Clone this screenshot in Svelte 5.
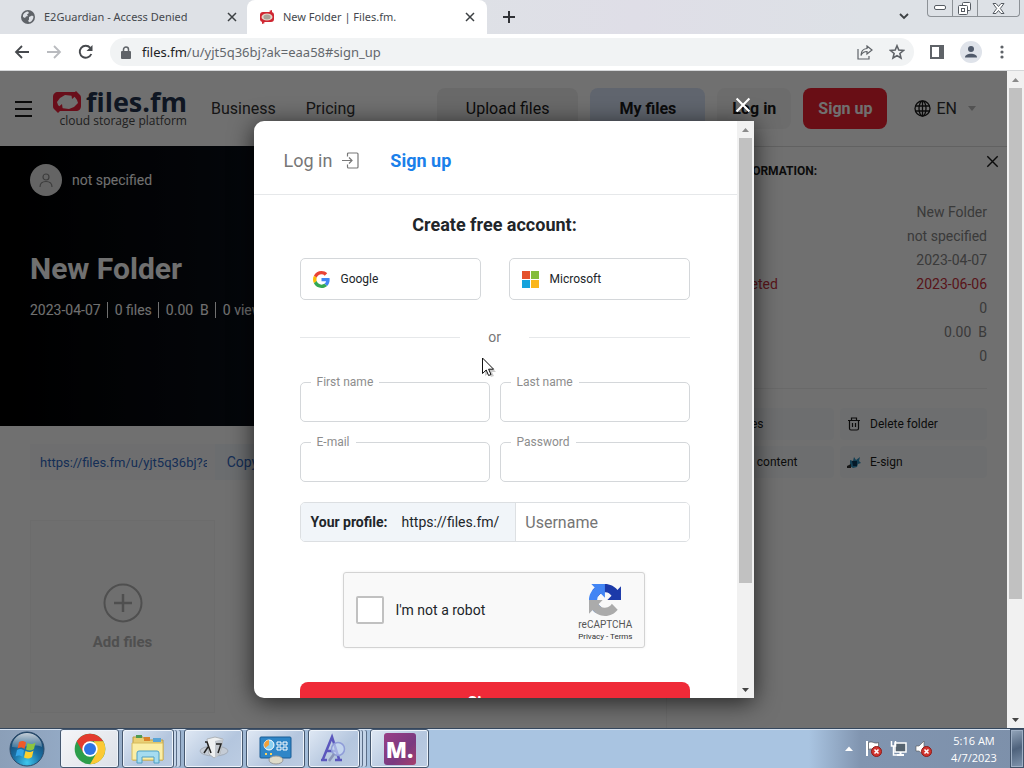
<script>
  const fields = [
    { id: 'first', label: 'First name', type: 'text' },
    { id: 'last', label: 'Last name', type: 'text' },
    { id: 'email', label: 'E-mail', type: 'email' },
    { id: 'pass', label: 'Password', type: 'password' }
  ];
  const info = [
    { label: '', value: 'New Folder' },
    { label: '', value: 'not specified' },
    { label: '', value: '2023-04-07' },
    { label: 'Will be deleted', value: '2023-06-06', alert: true },
    { label: '', value: '0' },
    { label: '', value: '0.00  B' },
    { label: '', value: '0' }
  ];
  const stats = ['2023-04-07', '0 files', '0.00  B', '0 views'];
</script>

{#snippet cross(size, color, width)}
  <svg width={size} height={size} viewBox="0 0 10 10" fill="none" stroke={color} stroke-width={width} aria-hidden="true"><path d="M1 1l8 8M9 1l-8 8" /></svg>
{/snippet}

{#snippet scrollbar(size)}
  <div class="scrollbar" aria-hidden="true">
    <span class="arrow"><svg width="7" height="4" viewBox="0 0 7 4"><path d="M0 4L3.500 0 7 4z" fill="#8b8b8b" /></svg></span>
    <div class="track"><div class="thumb" style="height:{size}%"></div></div>
    <span class="arrow"><svg width="7" height="4" viewBox="0 0 7 4"><path d="M0 0l3.500 4L7 0z" fill="#444" /></svg></span>
  </div>
{/snippet}

<div class="screen">
  <div class="tabs">
    <div class="tab">
      <svg width="16" height="16" viewBox="0 0 16 16"><circle cx="8" cy="8" r="7" fill="#5f6368" /><path d="M3 6c1-2 3-3.500 5-3.500l1 1.500-2 1.500 1 1.500-2 .5L5 9 3 8zM9 8l3-1.500 1.500 1C13.500 10 12 12.500 9.500 13.300L8 12l1-1.500z" fill="#dee1e6" /></svg>
      <span>E2Guardian - Access Denied</span>
      <button class="plain" aria-label="Close tab">{@render cross(10, '#3c4043', 1.5)}</button>
    </div>
    <div class="tab active">
      <svg width="16" height="16" viewBox="0 0 16 16"><rect x="1" y="3" width="14" height="10" rx="3" fill="#cf2631" /><ellipse cx="8" cy="8" rx="5.500" ry="3.600" fill="#e6d5c8" /><ellipse cx="8" cy="8" rx="3.600" ry="2.500" fill="#a8a298" /><path d="M3 12l3 2-3 1zM13 4l-3-2 3-1z" fill="#cf2631" /></svg>
      <span>New Folder | Files.fm.</span>
      <button class="plain" aria-label="Close tab">{@render cross(10, '#3c4043', 1.5)}</button>
    </div>
    <button class="plain newtab" aria-label="New tab"><svg width="12" height="12" viewBox="0 0 12 12" stroke="#303236" stroke-width="2"><path d="M6 0v12M0 6h12" /></svg></button>
    <button class="plain chevron" aria-label="Search tabs"><svg width="10" height="7" viewBox="0 0 10 7" fill="none" stroke="#3c4043" stroke-width="1.800"><path d="M1 1l4 4 4-4" /></svg></button>
    <div class="winbtns">
      <button aria-label="Minimize"><svg width="13" height="6" viewBox="0 0 13 6"><rect x=".5" y=".5" width="11" height="4" rx="1.500" fill="#fff" stroke="#555b62" /></svg></button>
      <button aria-label="Restore"><svg width="14" height="13" viewBox="0 0 14 13" fill="#fff" stroke="#555b62"><rect x="4.500" y=".5" width="8" height="8" rx="1" /><rect x=".5" y="3.500" width="9" height="9" rx="1" /><rect x="3.500" y="6.500" width="3" height="3" /></svg></button>
      <button class="wide" aria-label="Close"><svg width="13" height="11" viewBox="0 0 13 11"><path d="M1 .5h3l2.500 3 2.500-3h3L8.300 5.500l3.700 5H9l-2.500-3-2.500 3H1l3.700-5z" fill="#fff" stroke="#555b62" /></svg></button>
    </div>
  </div>

  <div class="toolbar">
    <button class="plain" aria-label="Back"><svg width="16" height="14" viewBox="0 0 16 14" fill="none" stroke="#46494d" stroke-width="1.800"><path d="M15 7H2M8 1L2 7l6 6" /></svg></button>
    <button class="plain" aria-label="Forward"><svg width="16" height="14" viewBox="0 0 16 14" fill="none" stroke="#b9bbbf" stroke-width="1.800"><path d="M1 7h13M8 1l6 6-6 6" /></svg></button>
    <button class="plain" aria-label="Reload"><svg width="16" height="16" viewBox="0 0 16 16"><path d="M13.300 10A6 6 0 1 1 12.300 3.800" fill="none" stroke="#46494d" stroke-width="1.900" /><path d="M14.500 1v6h-6z" fill="#46494d" /></svg></button>
    <div class="address">
      <svg width="10" height="13" viewBox="0 0 10 13"><rect y="5" width="10" height="8" rx="1" fill="#5f6368" /><path d="M2.500 5V3.500a2.500 2.500 0 0 1 5 0V5" fill="none" stroke="#5f6368" stroke-width="1.500" /></svg>
      <span class="url"><b>files.fm</b>/u/yjt5q36bj?ak=eaa58#sign_up</span>
      <button class="plain" aria-label="Share"><svg width="16" height="15" viewBox="0 0 16 15" fill="none" stroke="#5f6368" stroke-width="1.200"><path d="M1 4v10h11v-3M10 1l5 4-5 4V6.500C7 6.500 5 8 4 10.500 4 6.500 6 3.800 10 3.500z" /></svg></button>
      <button class="plain" aria-label="Bookmark"><svg width="16" height="16" viewBox="0 0 16 16" fill="none" stroke="#5f6368" stroke-width="1.600"><path d="M8 1.800l1.800 4.300 4.600.4-3.500 3 1.100 4.500L8 11.600 4 14l1.100-4.500-3.500-3 4.600-.4z" /></svg></button>
    </div>
    <button class="plain" aria-label="Side panel"><svg width="14" height="14" viewBox="0 0 14 14"><rect x="1" y="1" width="12" height="12" fill="none" stroke="#5f6368" stroke-width="2" /><path d="M9 1h4v12H9z" fill="#5f6368" /></svg></button>
    <button class="plain" aria-label="Profile"><svg width="22" height="22" viewBox="0 0 22 22"><circle cx="11" cy="11" r="11" fill="#dfe3ea" /><circle cx="11" cy="8" r="3" fill="#505a6b" /><path d="M5 16.500c0-5 12-5 12 0z" fill="#505a6b" /></svg></button>
    <button class="plain" aria-label="Menu"><svg width="8" height="14" viewBox="0 0 8 14" fill="#5f6368"><circle cx="4" cy="2" r="1.600" /><circle cx="4" cy="7" r="1.600" /><circle cx="4" cy="12" r="1.600" /></svg></button>
  </div>

  <div class="viewport">
    <div class="page">
      <header class="sitehead">
        <button class="plain" aria-label="Open menu"><svg width="17" height="16" viewBox="0 0 17 16" stroke="#1b1b1b" stroke-width="2"><path d="M0 1h17M0 8h17M0 15h17" /></svg></button>
        <a class="logo" href="#home">
          <span class="brand">
            <svg width="30" height="22" viewBox="0 0 30 22"><path d="M6 1h17l1-1 4 4c1 1 1 2 1 4v7c0 3-2 5-5 5H8l-2 2-4-4c-1-1-1-2-1-4V6c0-3 2-5 5-5z" fill="#f0203c" /><path d="M5 11l3-4 5-3 9 1 3 4 1 3-4 4-5 2-8-1-3-3z" fill="#fff" /><path d="M19 1l7 2-6 5zM11 20l-7-2 6-5z" fill="#f0203c" /></svg>
            <strong>files.fm</strong>
          </span>
          <small>cloud storage platform</small>
        </a>
        <nav><a href="#business">Business</a><a href="#pricing">Pricing</a></nav>
        <div class="actions">
          <button class="upload">Upload files</button>
          <button class="mine">My files</button>
          <button class="login">Log in</button>
          <button class="signup">Sign up</button>
        </div>
        <button class="plain lang">
          <svg width="17" height="17" viewBox="0 0 17 17" fill="none" stroke="#1b1b1b" stroke-width="1.300"><circle cx="8.500" cy="8.500" r="7.500" /><ellipse cx="8.500" cy="8.500" rx="3.500" ry="7.500" /><path d="M8.500 1v15M1.500 6h14M1.500 11h14" /></svg>
          <span>EN</span>
          <svg class="caret" width="8" height="5" viewBox="0 0 8 5"><path d="M0 0h8L4 5z" fill="#bbb" /></svg>
        </button>
      </header>

      <div class="columns">
        <main>
          <section class="hero">
            <div class="owner">
              <span class="avatar"><svg width="14" height="16" viewBox="0 0 14 16" fill="none" stroke="#8a8a8a" stroke-width="1.200"><circle cx="7" cy="5" r="3" /><path d="M1 15c0-5 3-5.500 6-5.500s6 .5 6 5.500" /></svg></span>
              <span>not specified</span>
            </div>
            <h1>New Folder</h1>
            <div class="stats">{#each stats as s}<span>{s}</span>{/each}</div>
          </section>
          <div class="share">
            <input aria-label="Folder link" value="https://files.fm/u/yjt5q36bj?ak=eaa58" readonly />
            <button class="plain">Copy link</button>
          </div>
          <button class="add">
            <svg width="40" height="40" viewBox="0 0 40 40" fill="none" stroke="#b4b4b4" stroke-width="2"><circle cx="20" cy="20" r="18.500" /><path d="M20 11v18M11 20h18" stroke-width="2.500" /></svg>
            <span>Add files</span>
          </button>
        </main>

        <aside>
          <div class="infohead">
            <h2>FOLDER INFORMATION:</h2>
            <button class="plain" aria-label="Close panel">{@render cross(13, '#1b1b1b', 1.1)}</button>
          </div>
          <dl>
            {#each info as row}
              <div class:alert={row.alert}><dt>{row.label}</dt><dd>{row.value}</dd></div>
            {/each}
          </dl>
          <div class="tools">
            <button><i></i>Add files</button>
            <button><svg width="14" height="14" viewBox="0 0 14 14" fill="none" stroke="#1b1b1b" stroke-width="1.200"><path d="M1 3.500h12M4.500 3V1h5v2M2.500 3.500v8q0 1.500 1.500 1.500h6q1.500 0 1.500-1.500v-8M5.500 6v4M8.500 6v4" /></svg>Delete folder</button>
            <button><i></i>Search content</button>
            <button><svg width="14" height="14" viewBox="0 0 14 14"><path d="M3 5l3 1 1-4 2 3 4-3-1 4 2 2-3 1-1 3-4 1-3-2z" fill="#2f8fbd" /><path d="M5 6h5v5H6z" fill="#0b3a5c" /><path d="M0 11l4-2v4H0z" fill="#333" /></svg>E-sign</button>
          </div>
        </aside>
      </div>

      <div class="overlay">
        <div class="modal" role="dialog" aria-labelledby="dlg-title">
          <button class="plain close" aria-label="Close">{@render cross(16, '#fff', 1.3)}</button>
          <div class="content">
            <div class="switch">
              <a href="#log_in">Log in
                <svg width="17" height="17" viewBox="0 0 17 17" fill="none" stroke="#777" stroke-width="1.200"><path d="M5.500 4.500V2q0-1 1-1H15q1 0 1 1v13q0 1-1 1H6.500q-1 0-1-1v-2.500M0 8.500h10M7 5.500l3 3-3 3" /></svg>
              </a>
              <a class="current" href="#sign_up">Sign up</a>
            </div>
            <form>
              <h2 id="dlg-title">Create free account:</h2>
              <div class="social">
                <button type="button"><svg width="17" height="17" viewBox="0 0 48 48"><path fill="#EA4335" d="M24 9.500c3.540 0 6.710 1.220 9.210 3.600l6.850-6.850C35.900 2.380 30.470 0 24 0 14.620 0 6.510 5.380 2.560 13.220l7.980 6.190C12.430 13.720 17.740 9.500 24 9.500z" /><path fill="#4285F4" d="M46.980 24.550c0-1.570-.15-3.090-.38-4.550H24v9.020h12.940c-.58 2.960-2.260 5.480-4.780 7.180l7.730 6c4.510-4.180 7.090-10.360 7.090-17.650z" /><path fill="#FBBC05" d="M10.530 28.590c-.48-1.450-.76-2.990-.76-4.590s.27-3.140.76-4.590l-7.980-6.190C.92 16.460 0 20.120 0 24c0 3.880.92 7.540 2.560 10.780l7.970-6.190z" /><path fill="#34A853" d="M24 48c6.480 0 11.930-2.130 15.890-5.810l-7.730-6c-2.150 1.450-4.920 2.300-8.160 2.300-6.260 0-11.570-4.220-13.470-9.910l-7.980 6.190C6.510 42.620 14.620 48 24 48z" /></svg>Google</button>
                <button type="button"><svg width="17" height="17" viewBox="0 0 18 18"><path fill="#e4512b" d="M0 0h8.500v8.500H0z" /><path fill="#84bd3c" d="M9.500 0H18v8.500H9.500z" /><path fill="#16a3dc" d="M0 9.500h8.500V18H0z" /><path fill="#fab61c" d="M9.500 9.500H18V18H9.500z" /></svg>Microsoft</button>
              </div>
              <div class="or"><span>or</span></div>
              <div class="fields">
                {#each fields as f}
                  <div class="field">
                    <input id={f.id} type={f.type} autocomplete="off" />
                    <label for={f.id}>{f.label}</label>
                  </div>
                {/each}
              </div>
              <div class="profile">
                <label for="user"><b>Your profile:</b><span>https://files.fm/</span></label>
                <input id="user" placeholder="Username" />
              </div>
              <div class="captcha">
                <label><input type="checkbox" />I'm not a robot</label>
                <div class="recap">
                  <svg width="32" height="32" viewBox="0 0 64 64"><path fill="#1c3aa9" d="M64 31.955l-.033-1.370V4.687l-7.160 7.160C50.948 4.674 42.033.093 32.050.093c-10.400 0-19.622 4.960-25.458 12.640l11.736 11.860a15.550 15.550 0 0 1 4.754-5.334c2.050-1.600 4.952-2.906 8.968-2.906.485 0 .86.057 1.135.163 4.976.393 9.288 3.140 11.828 7.124l-8.307 8.307L64 31.953" /><path fill="#4285f4" d="M31.862.094l-1.370.033H4.594l7.160 7.160C4.580 13.147 0 22.060 0 32.046c0 10.400 4.960 19.622 12.640 25.458L24.500 45.768a15.550 15.550 0 0 1-5.334-4.754c-1.600-2.050-2.906-4.952-2.906-8.968 0-.485.057-.86.163-1.135.393-4.976 3.140-9.288 7.124-11.828l8.307 8.307L31.860.095" /><path fill="#ababab" d="M.001 32.045l.033 1.370v25.898l7.160-7.160c5.860 7.173 14.774 11.754 24.760 11.754 10.400 0 19.622-4.960 25.458-12.640l-11.736-11.860a15.550 15.550 0 0 1-4.754 5.334c-2.050 1.600-4.952 2.906-8.968 2.906-.485 0-.86-.057-1.135-.163-4.976-.393-9.288-3.140-11.828-7.124l8.307-8.307L0 32.047" /></svg>
                  <span>reCAPTCHA</span>
                  <small><a href="#privacy">Privacy</a> - <a href="#terms">Terms</a></small>
                </div>
              </div>
              <button type="button" class="submit">Sign up</button>
            </form>
          </div>
          {@render scrollbar(82)}
        </div>
      </div>
    </div>
    {@render scrollbar(82)}
    <svg class="cursor" width="14" height="21" viewBox="0 0 14 21"><path d="M3 3v16l4-3 2 4 3-1-2-4h4z" fill="#0003" /><path d="M.5 1v15.500l3.700-3.500 2.400 5.500 2.400-1-2.400-5.300h5z" fill="#fff" stroke="#111" /></svg>
  </div>

  <div class="taskbar">
    <button class="plain orb" aria-label="Start">
      <svg width="36" height="38" viewBox="0 0 36 38"><defs><radialGradient id="orb" cx=".5" cy=".9" r=".85"><stop offset="0" stop-color="#3fc8ee" /><stop offset=".45" stop-color="#1c74a8" /><stop offset="1" stop-color="#123c63" /></radialGradient><linearGradient id="gloss" x2="0" y2="1"><stop offset="0" stop-color="#ffffffc0" /><stop offset="1" stop-color="#ffffff30" /></linearGradient></defs><circle cx="18" cy="19" r="17" fill="url(#orb)" stroke="#2c4a68" /><path d="M3 17a15 14 0 0 1 30 0c-9-4-20 2-30 0z" fill="url(#gloss)" /><path d="M10 12c3-1.500 5-1 7 .5l-1.500 6.500c-2-1.500-4-2-7-.5z" fill="#ef5a29" /><path d="M18.500 13c3 1.500 5 1.500 8-.5L25 19c-3 2-5 2-8 .5z" fill="#8cc540" /><path d="M8 20c3-1.500 5-1 7 .5L13.500 27c-2-1.500-4-2-7-.5z" fill="#35a6e8" /><path d="M16.500 21c3 1.500 5 1.500 8-.5L23 27c-3 2-5 2-8 .5z" fill="#fdd02e" /></svg>
    </button>
    <div class="apps">
      <button class="lit" aria-label="Chrome"><svg width="32" height="32" viewBox="0 0 48 48"><circle cx="24" cy="24" r="23" fill="#2c9e4b" /><path d="M4.100 12.500A23 23 0 0 1 43.900 12.500H24L14 29.800z" fill="#e33b2e" /><path d="M43.900 12.500A23 23 0 0 1 24 47l10-17.300-4-17.200z" fill="#fcc934" /><circle cx="24" cy="24" r="11.500" fill="#fff" /><circle cx="24" cy="24" r="9" fill="#2f74e4" /></svg></button>
      <button class="stack" aria-label="Explorer"><svg width="34" height="32" viewBox="0 0 34 32"><path d="M2 4h10l2 3h18v20H2z" fill="#e9cf74" stroke="#b99c46" /><path d="M5 2h6v3H5z" fill="#4d9b52" /><path d="M13 4h6v4h-6z" fill="#d9822b" /><path d="M22 5h8v4h-8z" fill="#5aa5d6" /><path d="M1 10h31v17H1z" fill="#fbeea6" stroke="#d6ba5c" /><path d="M6 30V20q0-2 2-2h18q2 0 2 2v10h-5v-6H11v6z" fill="#a5dcf0" stroke="#4e9fc4" /></svg></button>
      <button aria-label="Lambda"><svg width="34" height="28" viewBox="0 0 34 28"><ellipse cx="17" cy="16" rx="14" ry="5" fill="#c5ccd6" stroke="#a4adb9" /><path d="M10 4l8-2 8 2-3 15-6 4-5-4z" fill="#eef0f1" stroke="#aeb3b8" /><path d="M18 6v17l5-4 3-15z" fill="#c3c8ce" /><path d="M8 7h2l4 11M11 12l-4 6M19 9h5l-3 9" fill="none" stroke="#222" stroke-width="1.500" /></svg></button>
      <button aria-label="Control panel"><svg width="34" height="32" viewBox="0 0 34 32"><rect x="1" y="4" width="31" height="21" rx="1" fill="#2f86c7" stroke="#1b5d95" /><circle cx="10" cy="12" r="5" fill="#8bd0f1" stroke="#fff" /><path d="M10 12V7a5 5 0 0 0-4 8z" fill="#f2a13a" /><path d="M18 9h4v3h-4zm6 0h4v3h-4zm-6 5h4v3h-4zm6 0h4v3h-4z" fill="none" stroke="#fff" /><path d="M6 20h2v2H6zm5 0h2v2h-2z" fill="#ffd45a" /><ellipse cx="17" cy="27" rx="7" ry="4" fill="#dedbc9" stroke="#999" /></svg></button>
      <button class="stack" aria-label="Fonts"><svg width="32" height="32" viewBox="0 0 32 32"><path d="M5 26L14 4l7 22M9 18h9M3 27h6M17 27h7" fill="none" stroke="#5b57bd" stroke-width="2.500" /><circle cx="20" cy="16" r="6.500" fill="#cbdcf6aa" stroke="#8f9cd8" stroke-width="1.500" /><path d="M16 21l-5 7" stroke="#8a94b8" stroke-width="2.500" /></svg></button>
      <button aria-label="M."><span class="m">M.</span></button>
    </div>
    <div class="tray">
      <svg width="8" height="5" viewBox="0 0 8 5"><path d="M0 5l4-4.500L8 5z" fill="#fff" /></svg>
      <svg width="17" height="17" viewBox="0 0 17 17"><path d="M2 1v15" stroke="#fff" stroke-width="2" /><path d="M3.500 2.500c4-2 6 2 10 0v7c-4 2-6-2-10 0z" fill="#fff" stroke="#444" stroke-width=".6" /><circle cx="11.500" cy="11.500" r="5" fill="#d2352f" stroke="#8d1a17" /><path d="M9.500 9.500l4 4m0-4l-4 4" stroke="#fff" stroke-width="1.600" /></svg>
      <svg width="17" height="17" viewBox="0 0 17 17"><rect x="5" y="3" width="11" height="9" fill="#56636f" stroke="#fff" stroke-width="1.500" /><path d="M7 15h7M10.500 12v3" stroke="#fff" stroke-width="2" /><path d="M1.500 1v5h4V1M3.500 6v9H7" fill="none" stroke="#fff" stroke-width="1.500" /></svg>
      <svg width="17" height="17" viewBox="0 0 17 17"><path d="M1 6h3l5-5v14l-5-4H1z" fill="#fff" stroke="#555" stroke-width=".6" /><circle cx="11.500" cy="11.500" r="5" fill="#d2352f" stroke="#8d1a17" /><path d="M9.500 9.500l4 4m0-4l-4 4" stroke="#fff" stroke-width="1.600" /></svg>
    </div>
    <div class="clock"><span>5:16 AM</span><span>4/7/2023</span></div>
    <div class="peek"></div>
  </div>
</div>

<style>
  :global(body) { margin: 0; overflow: hidden; }
  * { box-sizing: border-box; }
  h1, h2, dl, dd { margin: 0; }
  a { color: inherit; text-decoration: none; }
  button, input { font: inherit; color: inherit; margin: 0; }
  button { border: 0; padding: 0; cursor: pointer; }
  svg { display: block; flex: none; }
  .plain { background: none; display: flex; align-items: center; justify-content: center; }
  .screen { height: 100vh; display: flex; flex-direction: column; font-family: Roboto, sans-serif; font-size: 14px; overflow: hidden; }

  .tabs { flex: none; height: 34px; padding-bottom: 1px; display: flex; background: linear-gradient(90deg, #dee1e6 45%, #dfdee7 62%, #dde1e6 85%); font-family: "Noto Sans", sans-serif; font-size: 11px; color: #45484d; }
  .tab { width: 240px; padding: 0 12px; display: flex; align-items: center; gap: 8px; }
  .tab:first-child { width: 247px; padding: 0 10px 0 20px; }
  .tab span { flex: 1; white-space: nowrap; }
  .tab.active { margin-bottom: -1px; padding-bottom: 1px; background: #fff; border-radius: 8px 8px 0 0; }
  .newtab { margin-left: 16px; }
  .chevron { margin-left: auto; }
  .winbtns { display: flex; height: 17px; margin: 0 4px 0 18px; border: 1px solid #8c9196; border-top: 0; border-radius: 0 0 4px 4px; }
  .winbtns button { width: 25px; background: none; display: grid; place-items: center; border-right: 1px solid #8c9196; }
  .winbtns .wide { width: 41px; border: 0; }

  .toolbar { flex: none; height: 37px; display: flex; align-items: center; gap: 16px; padding: 0 18px 0 14px; background: #fff; border-bottom: 1px solid #d5d7d9; }
  .address { flex: 1; height: 28px; border-radius: 14px; background: #f1f3f4; display: flex; align-items: center; gap: 16px; padding: 0 9px 0 11px; }
  .url { flex: 1; margin-left: -5px; font-family: "Noto Sans", sans-serif; font-size: 13px; color: #63676c; }
  .url b { font-weight: 400; color: #202124; }

  .viewport { flex: 1; min-height: 0; display: flex; position: relative; }
  .page { flex: 1; min-width: 0; position: relative; overflow: hidden; background: #fff; color: #1b1b1b; display: flex; flex-direction: column; }
  .scrollbar { flex: none; width: 17px; background: #f1f1f1; display: flex; flex-direction: column; }
  .arrow { height: 17px; display: grid; place-items: center; }
  .track { flex: 1; padding: 0 2px; }
  .thumb { background: #c1c1c1; }
  .cursor { position: absolute; left: 482px; top: 286px; }

  .sitehead { flex: none; height: 75px; display: flex; align-items: center; padding: 0 31px 0 15px; font-size: 16px; color: #333; }
  .logo { margin-left: 20px; display: flex; flex-direction: column; align-items: flex-end; font-family: "Open Sans", sans-serif; }
  .brand { display: flex; align-items: center; gap: 4px; }
  .brand strong { font-size: 27px; line-height: 24px; color: #24344f; }
  .logo small { font-size: 12px; line-height: 14px; color: #4a4a4a; }
  nav { display: flex; gap: 30px; margin-left: 24px; }
  .actions { display: flex; gap: 12px; margin-left: auto; color: #1b1b1b; }
  .actions button { height: 41px; padding: 0 15px; border-radius: 8px; font-weight: 700; background: #f6f6f6; }
  .actions .upload { padding: 0 29px; font-weight: 400; background: #f0f0f0; }
  .actions .mine { padding: 0 29px; background: #dae6fb; }
  .actions .signup { background: #ef2030; color: #fff; }
  .lang { margin-left: 27px; gap: 5px; }
  .caret { margin-left: 6px; }

  .columns { flex: 1; display: grid; grid-template-columns: 1fr 340px; }
  main { border-right: 1px solid #f4f4f4; }
  .hero { height: 280px; padding: 18px 30px 0; background: linear-gradient(90deg, #000 0%, #0d1420 50%, #142038 100%); color: #fff; }
  .owner { display: flex; align-items: center; gap: 10px; }
  .avatar { width: 32px; height: 32px; border-radius: 50%; background: #e4e4e4; display: grid; place-items: center; }
  h1 { margin-top: 56px; font-size: 30px; line-height: 34px; font-weight: 700; }
  .stats { margin-top: 16px; display: flex; line-height: 16px; white-space: pre; }
  .stats span + span { margin-left: 6px; padding-left: 7px; border-left: 1px solid #fff; }
  .share { display: flex; margin: 18px 30px 0; height: 36px; color: #3169c4; }
  .share input { width: 185px; padding: 0 8px 0 10px; border: 0; background: #fafbfd; font-size: 13px; outline: 0; }
  .share button { width: 80px; background: #f4f8fd; }
  .add { margin: 40px 30px 0; width: 185px; height: 193px; background: #fcfcfc; border: 1px solid #f5f5f5; display: flex; flex-direction: column; align-items: center; justify-content: center; gap: 10px; color: #b4b4b4; font-size: 15px; font-weight: 700; }

  aside { padding: 0 20px; border-top: 1px solid #ddd; }
  .infohead { display: flex; justify-content: space-between; margin-right: -12px; }
  .infohead h2 { font-size: 12px; line-height: 16px; margin-top: 16px; font-weight: 700; }
  .infohead button { height: 28px; }
  dl { margin-top: 21px; padding-bottom: 20px; border-bottom: 1px solid #eee; color: #858585; line-height: 24px; white-space: pre; }
  dl div { display: flex; justify-content: space-between; }
  .alert { color: #c9303c; }
  .tools { margin-top: 19px; display: grid; grid-template-columns: 1fr 1fr; gap: 6px; }
  .tools button { height: 32px; padding: 0 7px; background: #f9fbfc; border-radius: 4px; display: flex; align-items: center; gap: 9px; font-size: 12px; }
  .tools i { width: 14px; }

  .overlay { position: absolute; inset: 0; padding: 50px 0 30px; display: flex; justify-content: center; background: rgba(0, 0, 0, .56); }
  .modal { position: relative; width: 500px; display: flex; background: #fff; border-radius: 10px 0 0 10px; box-shadow: 0 4px 24px rgba(0, 0, 0, .7); }
  .close { position: absolute; right: 3px; top: -24px; }
  .content { flex: 1; min-width: 0; overflow: hidden; border-radius: 10px 0 0 10px; color: #212529; }
  .switch { height: 74px; padding: 6px 30px 0; display: flex; align-items: center; gap: 31px; border-bottom: 1px solid #e6e8ea; font-size: 18px; color: #777; }
  .switch a { display: flex; align-items: center; gap: 10px; }
  .switch .current { color: #1a80ea; font-weight: 700; }
  form { padding: 18px 47px 0 46px; }
  form h2 { font-size: 18px; line-height: 24px; font-weight: 700; text-align: center; }
  .social { margin-top: 21px; display: grid; grid-template-columns: 1fr 1fr; gap: 28px; }
  .social button { height: 42px; padding: 0 12px; display: flex; align-items: center; gap: 11px; background: #fff; border: 1px solid #d4d7da; border-radius: 5px; font-size: 12px; }
  .or { margin-top: 28px; height: 18px; display: flex; align-items: center; gap: 28px; color: #777; }
  .or::before, .or::after { content: ""; flex: 1; height: 1px; background: #e6e8ea; }
  .fields { margin-top: 36px; display: grid; grid-template-columns: 1fr 1fr; gap: 20px 10px; }
  .field { position: relative; }
  .field input { display: block; width: 100%; height: 40px; padding: 0 10px; border: 1px solid #d4d7da; border-radius: 5px; background: #fff; }
  .field label { position: absolute; left: 11px; top: -8px; padding: 0 6px; background: #fff; font-size: 12px; line-height: 16px; color: #8d8d8d; }
  .profile { margin-top: 20px; height: 40px; display: flex; border: 1px solid #dcdfe2; border-radius: 5px; overflow: hidden; }
  .profile label { padding: 0 16px 0 10px; display: flex; align-items: center; gap: 14px; background: #f1f5f9; border-right: 1px solid #dde0e3; }
  .profile b { font-weight: 700; }
  .profile input { flex: 1; min-width: 0; border: 0; padding: 0 9px; font-size: 16px; background: #fff; }
  .profile input::placeholder { color: #757575; }
  .captcha { width: 302px; height: 76px; margin: 30px auto 0 43px; padding: 0 11px 0 12px; display: flex; align-items: center; justify-content: space-between; background: #f9f9f9; border: 1px solid #d3d3d3; border-radius: 3px; box-shadow: 0 0 3px #0001; }
  .captcha label { display: flex; align-items: center; gap: 12px; }
  .captcha input { appearance: none; width: 28px; height: 28px; border: 2px solid #c1c1c1; border-radius: 2px; background: #fff; }
  .recap { display: flex; flex-direction: column; align-items: center; padding-top: 5px; color: #555; font-size: 10px; line-height: 14px; }
  .recap span { margin-top: 2px; }
  .recap small { font-size: 8px; line-height: 10px; color: #333; }
  .submit { display: block; width: 100%; height: 40px; margin-top: 34px; border-radius: 8px; background: #ef2a38; color: #fff; font-size: 16px; font-weight: 700; }

  .taskbar { flex: none; height: 40px; display: flex; align-items: stretch; border-top: 1px solid #35475d; box-shadow: inset 0 1px #d5e2f1; background: linear-gradient(90deg, #8b9fb8 0, #93a9c4 6%, #a9c4e1 40%, #a9c4e1 79%, #8195b0 84%, #7d90aa 100%); }
  .orb { width: 54px; }
  .apps { display: flex; gap: 3px; margin-left: 6px; }
  .apps button { width: 59px; display: grid; place-items: center; border: 1px solid #46586f; border-radius: 3px; background: linear-gradient(135deg, #dfe8f4, #b4c6de 60%, #bccce2); box-shadow: inset 0 0 0 1px #eef4fb; }
  .apps .lit { background: linear-gradient(135deg, #f5f6f8, #dce0e7); }
  .apps .stack { width: 52px; margin-right: 7px; box-shadow: inset 0 0 0 1px #eef4fb, 3px 0 0 -1px #c4d4e8, 4px 0 0 -1px #5b6e88, 7px 0 0 -1px #c4d4e8, 8px 0 0 -1px #5b6e88; }
  .m { width: 32px; height: 32px; display: grid; place-items: center; border-radius: 3px; background: linear-gradient(135deg, #993f86, #7a3a80 60%, #a63f6c); color: #fff; font-family: "Open Sans", sans-serif; font-size: 22px; font-weight: 800; }
  .tray { margin-left: auto; display: flex; align-items: center; gap: 8px; }
  .tray svg:first-child { margin-right: 4px; }
  .clock { width: 56px; margin: 0 8px 0 14px; padding-top: 3px; display: flex; flex-direction: column; align-items: center; color: #fff; font-family: "Open Sans", sans-serif; font-size: 11px; line-height: 17px; }
  .peek { width: 14px; border: 1px solid #42536a; background: linear-gradient(160deg, #94a6bb, #4e627c 50%, #8094ad); box-shadow: inset 0 0 0 1px #9fb0c5; }
</style>
